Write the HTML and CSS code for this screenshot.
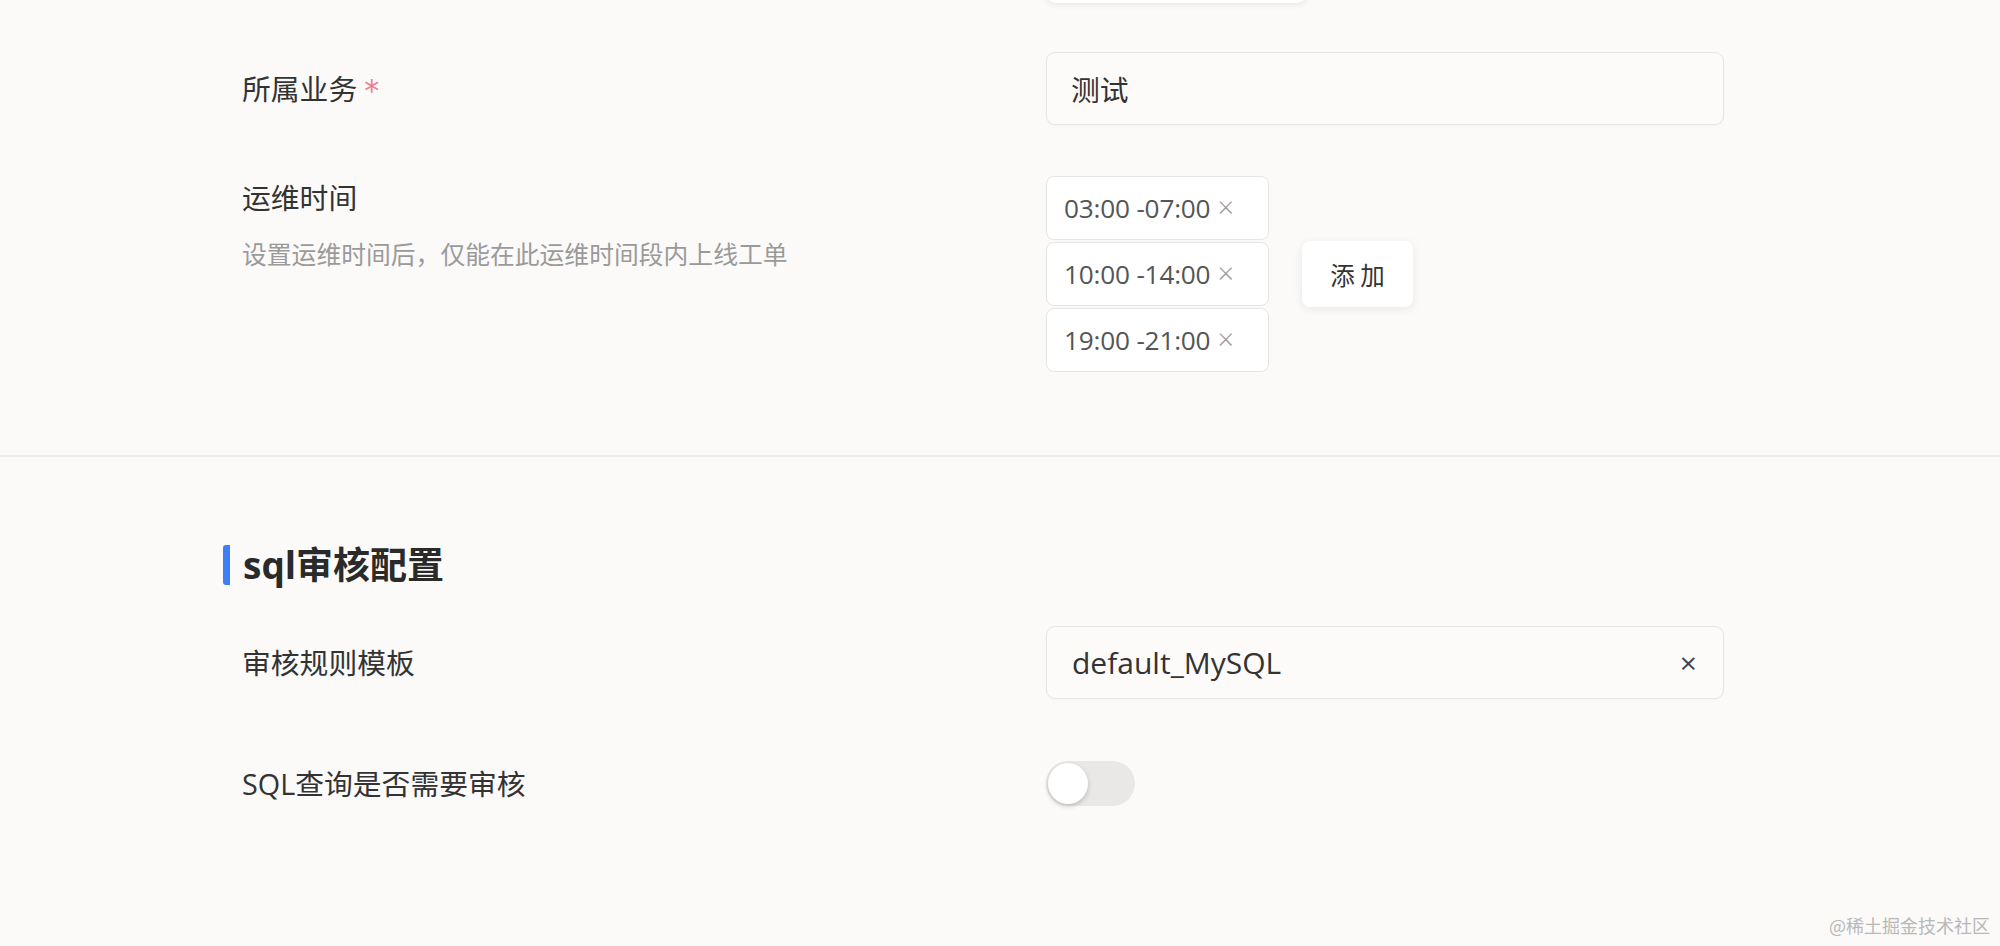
FILE: index.html
```html
<!DOCTYPE html>
<html lang="zh-CN">
<head>
<meta charset="utf-8">
<title>配置</title>
<link rel="stylesheet" href="styles.css">
</head>
<body>
<div class="page">
  <section class="section first">
    <div class="row stub-row">
      <div class="label-col"></div>
      <div class="control-col"><div class="stub"></div></div>
    </div>
    <div class="row row-biz">
      <div class="label-col"><span class="label">所属业务</span><span class="req">*</span></div>
      <div class="control-col"><div class="input">测试</div></div>
    </div>
    <div class="row row-time">
      <div class="label-col">
        <div class="label">运维时间</div>
        <div class="hint">设置运维时间后，仅能在此运维时间段内上线工单</div>
      </div>
      <div class="control-col time-ctl">
        <div class="tags">
          <div class="tag"><span>03:00 -07:00</span><span class="tag-x">×</span></div>
          <div class="tag"><span>10:00 -14:00</span><span class="tag-x">×</span></div>
          <div class="tag"><span>19:00 -21:00</span><span class="tag-x">×</span></div>
        </div>
        <button class="add-btn">添 加</button>
      </div>
    </div>
  </section>
  <section class="section second">
    <h2 class="title">sql审核配置</h2>
    <div class="row row-tpl">
      <div class="label-col"><span class="label">审核规则模板</span></div>
      <div class="control-col">
        <div class="input select"><span>default_MySQL</span><span class="clear">×</span></div>
      </div>
    </div>
    <div class="row row-switch">
      <div class="label-col"><span class="label">SQL查询是否需要审核</span></div>
      <div class="control-col"><div class="switch"><div class="thumb"></div></div></div>
    </div>
  </section>
</div>
<div class="watermark">@稀土掘金技术社区</div>
</body>
</html>
```
FILE: styles.css
```css
* { box-sizing: border-box; }
html, body { margin: 0; padding: 0; }
body {
  background: #fbfaf9;
  font-family: "Open Sans", "Noto Sans CJK SC", sans-serif;
  color: #333;
  width: 2000px;
  height: 946px;
  overflow: hidden;
  position: relative;
}
.page { width: 2000px; }
.section { padding-left: 242px; }
.first { padding-bottom: 83px; border-bottom: 2px solid #ebebea; }
.row { display: flex; align-items: center; }
.label-col { width: 804px; flex: none; display: flex; align-items: center; }
.row-time .label-col { display: block; }
.control-col { width: 678px; flex: none; }
.label { font-size: 28.8px; line-height: 44px; color: #333; }
.req {
  color: #ef7d92;
  font-family: "DejaVu Sans", sans-serif;
  font-size: 30px;
  line-height: 1;
  margin-left: 7px;
  margin-top: 4px;
}

.stub-row { height: 3px; align-items: flex-end; }
.stub {
  width: 261px; height: 30px;
  background: #fff;
  border-radius: 10px;
  box-shadow: 0 2px 6px rgba(0,0,0,0.08);
  margin-top: -27px;
}

.row-biz { margin-top: 49px; }
.input {
  height: 73px;
  border: 1px solid #e6e5e4;
  border-radius: 9px;
  background: #fcfbfa;
  box-shadow: 0 1px 2px rgba(0,0,0,0.03);
  display: flex; align-items: center;
  padding: 0 24px 0 24px;
  font-size: 28.8px;
  color: #333;
}

.row-time { margin-top: 51px; align-items: flex-start; }
.hint { font-size: 24.8px; line-height: 36px; color: #9a9a9a; margin-top: 16px; }
.time-ctl { display: flex; align-items: center; gap: 33px; }
.tags { display: flex; flex-direction: column; gap: 2px; }
.tag {
  width: 223px; height: 64px;
  background: #fff;
  border: 1px solid #e6e5e4;
  border-radius: 8px;
  display: flex; align-items: center;
  padding-left: 17px;
  font-size: 26.2px;
  color: #555;
  letter-spacing: -0.2px;
}
.tag-x { color: #999; font-size: 29px; margin-left: 7px; line-height: 1; margin-top: -4px; font-weight: 300; }
.add-btn {
  width: 111px; height: 66px;
  border: none;
  background: #fff;
  border-radius: 8px;
  box-shadow: 0 2px 10px rgba(0,0,0,0.08);
  font-family: "Noto Sans CJK SC", sans-serif;
  font-size: 24.5px;
  color: #333;
  padding: 0;
}

.second { padding-top: 88px; }
.title {
  margin: 0 0 0 -19px;
  border-left: 7px solid #3d7ff7;
  padding-left: 13px;
  font-size: 37px;
  line-height: 40px;
  font-weight: 700;
  color: #2a2a2a;
  border-radius: 3px;
}
.row-tpl { margin-top: 41px; }
.select { justify-content: space-between; padding: 0 26px 0 25px; font-size: 30px; }
.clear { color: #444; font-size: 30px; line-height: 1; }

.row-switch { margin-top: 62px; }
.switch {
  width: 89px; height: 45px;
  border-radius: 23px;
  background: #e9e8e7;
  position: relative;
}
.thumb {
  position: absolute; left: 2px; top: 2px;
  width: 40px; height: 41px;
  border-radius: 50%;
  background: #fff;
  box-shadow: 0 2px 5px rgba(0,0,0,0.2);
}

.watermark {
  position: absolute;
  right: 10px; bottom: 8px;
  font-family: "Noto Sans CJK SC", sans-serif;
  font-size: 18px;
  color: #b8b8b8;
}
```
